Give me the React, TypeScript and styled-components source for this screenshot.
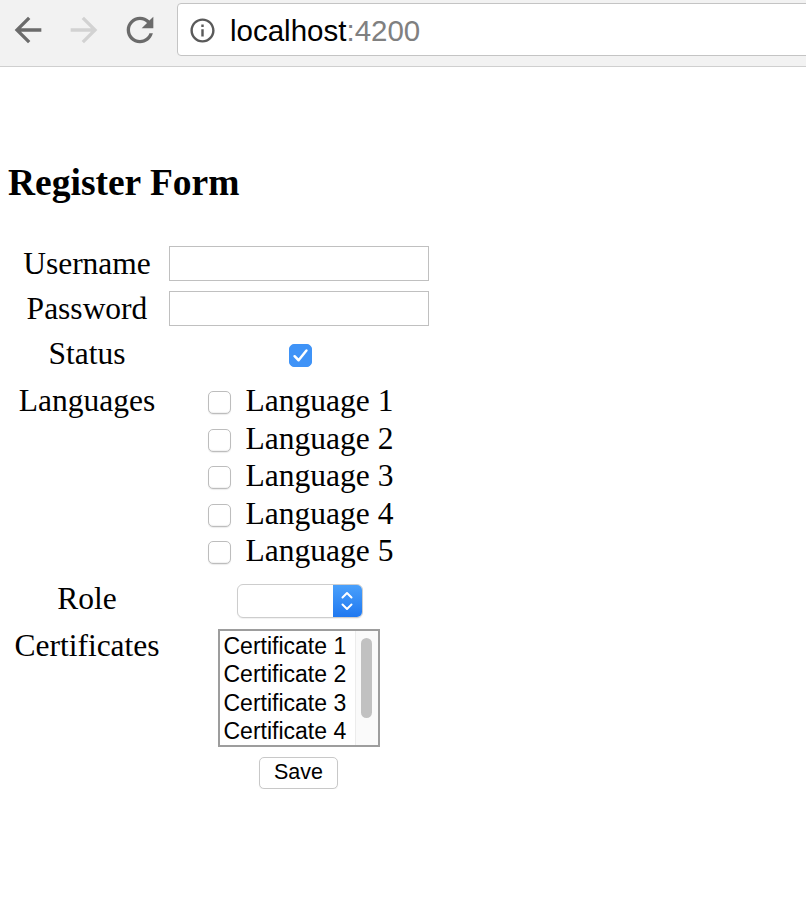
import React from "react";
import styled, { createGlobalStyle } from "styled-components";

const GlobalStyle = createGlobalStyle`
  html, body { margin: 0; padding: 0; background: #ffffff; }
  body { font-family: "Liberation Serif", "Times New Roman", serif; color: #000; }
`;

const Toolbar = styled.div`
  height: 66px;
  border-bottom: 1px solid #cfcfcf;
  background: #f2f2f2;
  display: flex;
  align-items: flex-start;
  padding-left: 8px;
  overflow: hidden;
`;

const NavButton = styled.div<{ $color: string }>`
  width: 40px;
  height: 40px;
  margin-top: 10px;
  margin-right: 16px;
  color: ${(p) => p.$color};
  display: flex;
  svg { width: 40px; height: 40px; fill: currentColor; }
`;

const AddressField = styled.div`
  flex: 1;
  margin-top: 3px;
  margin-left: 1px;
  margin-right: -20px;
  height: 51px;
  border: 1px solid #c4c4c4;
  border-radius: 4px;
  background: #fff;
  display: flex;
  align-items: center;
  padding-left: 10px;
  gap: 13px;
  svg { width: 29px; height: 29px; fill: #5a5a5a; flex: none; margin-top: 2px; }
`;

const Url = styled.span`
  font-family: "Liberation Sans", Arial, sans-serif;
  font-size: 29.5px;
  color: #000;
  margin-top: 2px;
`;

const Port = styled.span`
  color: #808080;
`;

const Page = styled.main`
  padding: 95px 8px 0 8px;
`;

const Title = styled.h2`
  margin: 0 0 42px 0;
  font-size: 37.5px;
  font-weight: bold;
  line-height: 42px;
`;

const FormGrid = styled.form`
  display: grid;
  grid-template-columns: 158px 265px;
  row-gap: 10px;
`;

const Label = styled.div<{ $top?: boolean; $offset?: number }>`
  font-size: 31.5px;
  line-height: 35px;
  text-align: center;
  align-self: ${(p) => (p.$top ? "start" : "center")};
  margin-top: ${(p) => p.$offset ?? 0}px;
`;

const Cell = styled.div<{ $offset?: number }>`
  display: flex;
  flex-direction: column;
  align-items: center;
  justify-content: center;
  margin-top: ${(p) => p.$offset ?? 0}px;
`;

const TextInput = styled.input`
  box-sizing: border-box;
  width: 260px;
  height: 35px;
  border: 1px solid #c0c0c0;
  background: #fff;
  padding: 0 4px;
  font-size: 20px;
  outline: none;
`;

const Box = styled.span<{ $checked?: boolean }>`
  box-sizing: border-box;
  width: 23px;
  height: 23px;
  border-radius: 5px;
  flex: none;
  display: inline-flex;
  align-items: center;
  justify-content: center;
  background: ${(p) => (p.$checked ? "#3f93f7" : "#ffffff")};
  border: 1px solid ${(p) => (p.$checked ? "#3f93f7" : "#bdbdbd")};
  box-shadow: ${(p) => (p.$checked ? "none" : "inset 0 -1px 1px rgba(0,0,0,0.06), 0 1px 1px rgba(0,0,0,0.08)")};
  svg { width: 19px; height: 19px; }
`;

const StatusBox = styled(Box)`
  margin: 4px 0 0 3px;
`;

const LangList = styled.div`
  display: flex;
  flex-direction: column;
  align-items: flex-start;
  padding-left: 4px;
`;

const LangItem = styled.label`
  display: flex;
  align-items: center;
  font-size: 31.5px;
  line-height: 37.5px;
  gap: 15px;
  ${Box} { margin-top: 4px; }
`;

const FakeSelect = styled.div`
  box-sizing: border-box;
  width: 126px;
  height: 34px;
  border: 1px solid #cdcdcd;
  border-radius: 6px;
  background: #fff;
  display: flex;
  justify-content: flex-end;
  overflow: hidden;
  box-shadow: 0 1px 1px rgba(0,0,0,0.06);
  margin-left: 2px;
`;

const Stepper = styled.div`
  width: 29px;
  height: 100%;
  background: linear-gradient(#4aa0fb, #1f78f0);
  display: flex;
  align-items: center;
  justify-content: center;
  svg { width: 16px; height: 28px; }
`;

const ListBox = styled.div`
  box-sizing: border-box;
  width: 162px;
  height: 118px;
  border: 2px solid #9d9d9d;
  background: #fff;
  display: flex;
  overflow: hidden;
`;

const Options = styled.div`
  flex: 1;
  padding: 1px 0 0 4px;
  overflow: hidden;
`;

const Option = styled.div`
  font-family: "Liberation Sans", Arial, sans-serif;
  font-size: 23px;
  line-height: 28.5px;
  white-space: nowrap;
`;

const ScrollTrack = styled.div`
  width: 22px;
  flex: none;
  border-left: 1px solid #ececec;
  background: #fafafa;
  display: flex;
  justify-content: center;
  padding-top: 7px;
`;

const ScrollThumb = styled.div`
  width: 11px;
  height: 80px;
  border-radius: 6px;
  background: #c1c1c1;
`;

const SaveButton = styled.button`
  box-sizing: border-box;
  width: 79px;
  height: 32px;
  border: 1px solid #c8c8c8;
  border-radius: 5px;
  background: #fff;
  font-family: "Liberation Sans", Arial, sans-serif;
  font-size: 21.5px;
  color: #000;
  padding: 0;
  box-shadow: 0 1px 1px rgba(0,0,0,0.06);
`;

const Check = () => (
  <svg viewBox="0 0 16 16">
    <path d="M3 8.6 L6.4 12 L13 3.8" fill="none" stroke="#fff" strokeWidth="2.1" strokeLinecap="round" strokeLinejoin="round" />
  </svg>
);

const languages = ["Language 1", "Language 2", "Language 3", "Language 4", "Language 5"];
const certificates = ["Certificate 1", "Certificate 2", "Certificate 3", "Certificate 4"];

export default function App() {
  return (
    <>
      <GlobalStyle />
      <Toolbar>
        <NavButton $color="#6b6b6b">
          <svg viewBox="0 0 24 24"><path d="M20 11H7.83l5.59-5.59L12 4l-8 8 8 8 1.41-1.41L7.83 13H20v-2z" /></svg>
        </NavButton>
        <NavButton $color="#d2d2d2">
          <svg viewBox="0 0 24 24"><path d="M12 4l-1.41 1.41L16.17 11H4v2h12.17l-5.58 5.59L12 20l8-8z" /></svg>
        </NavButton>
        <NavButton $color="#6b6b6b">
          <svg viewBox="0 0 24 24"><path d="M17.65 6.35C16.2 4.9 14.21 4 12 4c-4.42 0-7.990 3.58-7.990 8s3.57 8 7.990 8c3.73 0 6.84-2.55 7.73-6h-2.08c-.82 2.33-3.04 4-5.65 4-3.31 0-6-2.69-6-6s2.69-6 6-6c1.66 0 3.14.69 4.22 1.78L13 11h7V4l-2.35 2.35z" /></svg>
        </NavButton>
        <AddressField>
          <svg viewBox="0 0 24 24"><path d="M11 7h2v2h-2zm0 4h2v6h-2zm1-9C6.48 2 2 6.48 2 12s4.48 10 10 10 10-4.48 10-10S17.52 2 12 2zm0 18c-4.41 0-8-3.59-8-8s3.59-8 8-8 8 3.59 8 8-3.59 8-8 8z" /></svg>
          <Url>localhost<Port>:4200</Port></Url>
        </AddressField>
      </Toolbar>
      <Page>
        <Title>Register Form</Title>
        <FormGrid onSubmit={(e) => e.preventDefault()}>
          <Label>Username</Label>
          <Cell><TextInput type="text" /></Cell>

          <Label>Password</Label>
          <Cell><TextInput type="password" /></Cell>

          <Label>Status</Label>
          <Cell><StatusBox $checked><Check /></StatusBox></Cell>

          <Label $top $offset={2}>Languages</Label>
          <Cell $offset={1}>
            <LangList>
              {languages.map((l) => (
                <LangItem key={l}>
                  <Box />
                  {l}
                </LangItem>
              ))}
            </LangList>
          </Cell>

          <Label>Role</Label>
          <Cell $offset={4}>
            <FakeSelect>
              <Stepper>
                <svg viewBox="0 0 16 28">
                  <path d="M3.5 10.5 L8 6 L12.5 10.5 M3.5 17.5 L8 22 L12.5 17.5" fill="none" stroke="#fff" strokeWidth="2" strokeLinecap="round" strokeLinejoin="round" />
                </svg>
              </Stepper>
            </FakeSelect>
          </Cell>

          <Label $top>Certificates</Label>
          <Cell $offset={1}>
            <ListBox>
              <Options>
                {certificates.map((c) => (
                  <Option key={c}>{c}</Option>
                ))}
              </Options>
              <ScrollTrack><ScrollThumb /></ScrollTrack>
            </ListBox>
          </Cell>

          <span />
          <Cell><SaveButton type="submit">Save</SaveButton></Cell>
        </FormGrid>
      </Page>
    </>
  );
}
